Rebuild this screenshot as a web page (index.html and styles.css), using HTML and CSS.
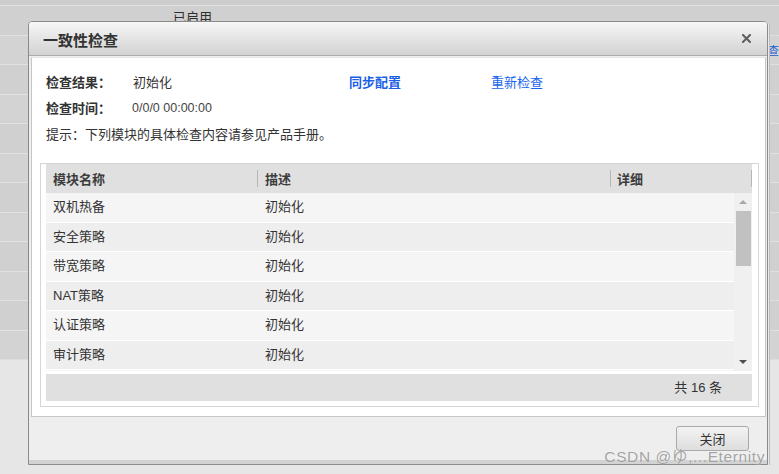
FILE: index.html
```html
<!DOCTYPE html>
<html lang="zh-CN">
<head>
<meta charset="utf-8">
<title>一致性检查</title>
<link rel="stylesheet" href="styles.css">
</head>
<body>
<div class="page">
  <div class="page-top"></div>
  <div class="bg-row"><span class="bg-status">已启用</span></div>
  <div class="bg-row alt"><span class="bg-link">查</span></div>
  <div class="bg-row"></div>
  <div class="bg-row alt"></div>
  <div class="bg-row"></div>
  <div class="bg-row alt"></div>
  <div class="bg-row"></div>
  <div class="bg-row alt"></div>
  <div class="bg-row"></div>
  <div class="bg-row alt"></div>
  <div class="bg-row"></div>
  <div class="bg-row alt"></div>
  <div class="page-rest"></div>
</div>

<div class="dialog">
  <div class="dialog-title">
    <span class="dialog-title-text">一致性检查</span>
    <svg class="dialog-close" width="9" height="9" viewBox="0 0 9 9"><path d="M1 1L8 8M8 1L1 8" stroke="#5e5e5e" stroke-width="2" stroke-linecap="square"/></svg>
  </div>
  <div class="dialog-body">
    <div class="info">
      <span class="info-label">检查结果：</span>
      <span class="info-value">初始化</span>
      <a class="info-link strong">同步配置</a>
      <a class="info-link">重新检查</a>
      <span class="info-label">检查时间：</span>
      <span class="info-value time">0/0/0 00:00:00</span>
      <span></span>
      <span></span>
      <span class="info-tip">提示：下列模块的具体检查内容请参见产品手册。</span>
    </div>
    <div class="grid-box">
      <div class="grid-head">
        <span class="th th-name">模块名称</span>
        <span class="sep"></span>
        <span class="th th-desc">描述</span>
        <span class="sep"></span>
        <span class="th th-detail">详细</span>
        <span class="sep"></span>
      </div>
      <div class="grid-view">
        <div class="grid-rows">
          <div class="tr"><span class="td td-name">双机热备</span><span class="td">初始化</span></div>
          <div class="tr alt"><span class="td td-name">安全策略</span><span class="td">初始化</span></div>
          <div class="tr"><span class="td td-name">带宽策略</span><span class="td">初始化</span></div>
          <div class="tr alt"><span class="td td-name">NAT策略</span><span class="td">初始化</span></div>
          <div class="tr"><span class="td td-name">认证策略</span><span class="td">初始化</span></div>
          <div class="tr alt"><span class="td td-name">审计策略</span><span class="td">初始化</span></div>
        </div>
        <div class="scrollbar">
          <div class="sb-btn"><span class="tri-up"></span></div>
          <div class="sb-thumb"></div>
          <div class="sb-space"></div>
          <div class="sb-btn"><span class="tri-down"></span></div>
        </div>
      </div>
      <div class="grid-foot">共 16 条</div>
    </div>
  </div>
  <div class="dialog-footer">
    <button class="btn">关闭</button>
  </div>
</div>

<div class="watermark">CSDN @ゆ,...Eternity</div>
</body>
</html>
```

FILE: styles.css
```css
* { box-sizing: border-box; }

html, body {
  margin: 0;
  padding: 0;
}

body {
  width: 779px;
  height: 474px;
  overflow: hidden;
  position: relative;
  background: #e6e6e6;
  font-family: "Liberation Sans", "Noto Sans CJK SC", sans-serif;
  font-size: 13px;
  color: #333;
}

/* background page under the modal mask */
.page {
  display: flex;
  flex-direction: column;
  width: 779px;
  height: 474px;
}

.page-top {
  height: 5px;
  background: #cdcdcd;
}

.bg-row {
  height: 29.5px;
  flex: none;
  border-top: 1px solid #e1e1e1;
  background: #d0d0d0;
  display: flex;
  align-items: flex-start;
  white-space: nowrap;
  overflow: hidden;
}

.bg-row.alt {
  background: #d3d3d3;
}

.page-rest {
  flex: 1;
  border-top: 1px solid #dcdcdc;
  background: #e6e6e6;
}

.bg-status {
  margin-left: 173px;
  margin-top: 3px;
  line-height: 18px;
  color: #2e2e2e;
}

.bg-link {
  margin-left: 768px;
  margin-top: 5px;
  line-height: 18px;
  color: #1d5bd0;
  font-family: "Noto Sans CJK SC", sans-serif;
  font-size: 11px;
}

/* dialog */
.dialog {
  position: absolute;
  left: 28px;
  top: 21px;
  width: 740px;
  height: 444px;
  border: 1px solid #8a8a8a;
  border-radius: 4px 4px 0 0;
  background: #eeeeee;
  box-shadow: 1px 0 0 #e9e9e9, 2px 0 0 #bdbdbd;
  display: flex;
  flex-direction: column;
}

.dialog-title {
  height: 34px;
  flex: none;
  border-bottom: 1px solid #acacac;
  border-radius: 3px 3px 0 0;
  background: linear-gradient(#f7f7f7, #d2d2d2);
  display: flex;
  align-items: center;
  padding: 2px 16px 0 14px;
}

.dialog-title-text {
  flex: 1;
  font-family: "Noto Sans CJK SC", sans-serif;
  font-size: 15px;
  font-weight: bold;
  line-height: 20px;
  color: #333;
}

.dialog-close {
  display: block;
  margin-top: -2px;
}

.dialog-body {
  flex: none;
  height: 360px;
  margin: 1px 1px 0 2px;
  border: 1px solid #c6c6c6;
  border-top-color: #e4e4e4;
  background: #fff;
  display: flex;
  flex-direction: column;
}

.info {
  display: grid;
  grid-template-columns: 87px 216px 142px 1fr;
  grid-auto-rows: 26px;
  align-items: center;
  padding: 11px 0 0 14px;
  font-family: "Noto Sans CJK SC", sans-serif;
  font-size: 13px;
  line-height: 18px;
}

.info-label {
  font-weight: bold;
  color: #333;
}

.info-value {
  color: #333;
}

.info-value.time {
  font-family: "Liberation Sans", sans-serif;
  font-size: 12.5px;
  color: #444;
  margin-left: -1px;
}

.info-link {
  color: #1764ec;
  cursor: pointer;
}

.info-link.strong {
  font-weight: bold;
  color: #1a5fe6;
}

.info-tip {
  grid-column: 1 / -1;
  color: #333;
}

/* grid */
.grid-box {
  margin: 16px 6px 0 8px;
  height: 244px;
  border: 1px solid #d6d6d6;
  padding: 0 6px 5px 5px;
  display: flex;
  flex-direction: column;
}

.grid-head {
  height: 29px;
  flex: none;
  background: #e0e0e0;
  display: flex;
  align-items: center;
  font-family: "Noto Sans CJK SC", sans-serif;
  font-weight: bold;
  color: #3c3c3c;
  line-height: 18px;
}

.th {
  flex: none;
  white-space: nowrap;
}

.th-name { width: 211px; padding-left: 7px; }
.th-desc { width: 352px; padding-left: 7px; }
.th-detail { width: 140px; padding-left: 6px; }

.sep {
  flex: none;
  width: 1px;
  height: 17px;
  background: #b6b6b6;
}

.grid-view {
  height: 178px;
  flex: none;
  display: flex;
  overflow: hidden;
}

.grid-rows {
  flex: 1;
  background: #f5f5f5;
  overflow: hidden;
}

.tr {
  height: 29.5px;
  border-bottom: 1px solid #fff;
  background: #f5f5f5;
  display: flex;
  align-items: center;
  color: #333;
  line-height: 18px;
}

.tr.alt {
  background: #eeeeee;
}

.td {
  padding-left: 7px;
  white-space: nowrap;
}

.td-name {
  width: 212px;
}

.scrollbar {
  width: 18px;
  flex: none;
  background: #f0f0f0;
  display: flex;
  flex-direction: column;
}

.sb-btn {
  height: 18px;
  flex: none;
  display: flex;
  align-items: center;
  justify-content: center;
}

.tri-up {
  width: 0;
  height: 0;
  border-left: 4px solid transparent;
  border-right: 4px solid transparent;
  border-bottom: 4px solid #a8a8a8;
}

.tri-down {
  width: 0;
  height: 0;
  border-left: 4px solid transparent;
  border-right: 4px solid transparent;
  border-top: 4px solid #4e4e4e;
}

.sb-thumb {
  height: 55px;
  margin: 0 1px 0 2px;
  background: #c1c1c1;
  flex: none;
}

.sb-space {
  flex: 1;
}

.grid-foot {
  margin-top: 3px;
  height: 27px;
  flex: none;
  background: #e0e0e0;
  display: flex;
  align-items: center;
  justify-content: flex-end;
  padding-right: 30px;
  color: #333;
  line-height: 18px;
  white-space: pre;
}

/* footer */
.dialog-footer {
  flex: 1;
  border-bottom: 4px solid #d2d2d2;
  display: flex;
  justify-content: flex-end;
  align-items: flex-start;
  padding: 9px 18px 0 0;
}

.btn {
  width: 73px;
  height: 25px;
  border: 1px solid #a9a9a9;
  border-radius: 3px;
  background: linear-gradient(#f3f3f3, #dedede);
  font-family: "Noto Sans CJK SC", sans-serif;
  font-size: 13px;
  color: #333;
  padding: 0;
  line-height: 20px;
}

.watermark {
  position: absolute;
  right: 14px;
  bottom: 8px;
  font-family: "Liberation Sans", "Noto Sans CJK JP", sans-serif;
  font-size: 15.5px;
  letter-spacing: 0.6px;
  line-height: 18px;
  color: rgba(105, 105, 105, 0.62);
  text-shadow: 0 0 1px rgba(255, 255, 255, 0.9);
  white-space: nowrap;
}
```
